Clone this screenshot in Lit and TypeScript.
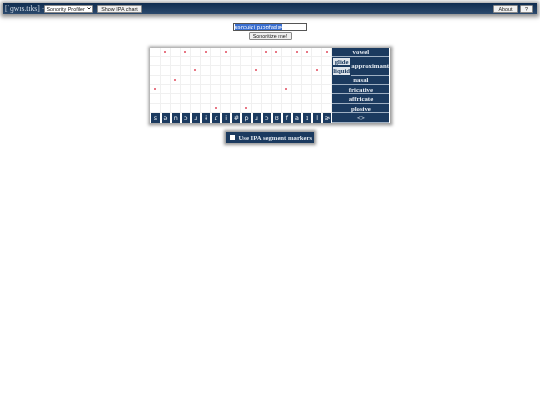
import { LitElement, html, css } from "lit";
import { customElement } from "lit/decorators.js";

const letters = ["s","ə","n","ɔ","ɹ","ɨ","ɾ","i","#","p","ɹ","ɔ","ʊ","f","a","ɪ","l","ɚ"];
// row index of the dot per column: 0 vowel, 1 glide, 2 liquid, 3 nasal, 4 fricative, 5 affricate, 6 plosive
const dots = [4,0,3,0,2,0,6,0,-1,6,2,0,0,4,0,0,2,0];

@customElement("app-root")
export class AppRoot extends LitElement {
  static styles = css`
    :host { display: block; width: 540px; height: 405px; background: #fff; overflow: hidden;
      font-family: "Liberation Sans", Arial, sans-serif; }
    .page { display: flex; flex-direction: column; align-items: center; filter: blur(0.3px); }
    .bar { box-sizing: border-box; align-self: stretch; margin: 3px 3px 0; height: 11px; display: flex; align-items: center;
      gap: 4px; padding: 0 4px 0 2px; background: linear-gradient(#0f2c4f, #2c4a6d);
      box-shadow: 0 1px 4px 2px rgba(70,70,70,.6); }
    .brand { font-family: "Liberation Serif", "DejaVu Serif", serif; font-size: 7.6px; color: #cfd8e3; white-space: nowrap; width: 35px; }
    .ctl { box-sizing: border-box; height: 8px; font-family: "Liberation Sans", sans-serif; font-size: 5.4px; line-height: 6px;
      color: #222; background: #efefef; border: 0.5px solid #888; border-radius: 1px; padding: 0; display: flex;
      align-items: center; justify-content: center; white-space: nowrap; }
    .select { width: 49px; background: #fff; justify-content: space-between; padding: 0 1px 0 1.5px; }
    .select svg { width: 4px; height: 3px; }
    .chart { width: 45px; }
    .spacer { flex: 1; }
    .about { width: 25px; margin-right: -2px; }
    .help { width: 13px; background: #f4f4f4; }
    .form { display: flex; flex-direction: column; align-items: center; gap: 1px; margin-top: 8.5px; }
    .input { box-sizing: border-box; width: 74px; height: 8px; border: 0.75px solid #555; background: #fff; display: flex;
      align-items: center; padding-left: 0.5px; font-family: "DejaVu Sans", sans-serif; font-size: 5.4px; line-height: 6px; overflow: hidden; }
    .input span { background: #3a6fd0; color: #fff; white-space: nowrap; }
    .go { width: 43px; height: 8px; }
    .chart-wrap { margin-top: 8px; display: grid; grid-template-columns: repeat(18, 10.12px) 18.5px 38.5px; grid-auto-rows: 9.4px;
      width: 239.16px; box-shadow: 0 0 3px 2.5px rgba(90,90,90,.6); background: #fff; }
    .cell { box-sizing: border-box; border-right: 0.5px solid #f0f0f0; border-bottom: 0.5px solid #f0f0f0; display: flex;
      align-items: center; justify-content: center; }
    .dot { width: 2px; height: 2px; border-radius: 50%; background: #e04a5c; }
    .seg { box-sizing: border-box; background: #1b3a5f; color: #e6ecf3; border: 0.5px solid #fff; border-width: 0 0.5px 0 0.5px;
      font-family: "DejaVu Sans", sans-serif; font-size: 6.4px; display: flex; align-items: center; justify-content: center; line-height: 1; }
    .label { box-sizing: border-box; background: #1b3a5f; color: #e3e9f0; border-bottom: 0.75px solid #9fb0c3;
      font-family: "Liberation Serif", serif; font-weight: bold; font-size: 6.8px; display: flex; align-items: center;
      justify-content: center; white-space: nowrap; }
    .full { grid-column: span 2; }
    .sub { background: #dfe5ec; color: #1b3a5f; border: 0.75px solid #1b3a5f; }
    .approx { grid-row: span 2; }
    .toggle { margin-top: 9px; box-sizing: border-box; width: 88px; height: 11px; background: #1b3a5f; display: flex; align-items: center;
      gap: 3.5px; padding-left: 4px; box-shadow: 0 0 3px 2px rgba(90,90,90,.65); color: #dfe6ee;
      font-family: "Liberation Serif", serif; font-weight: bold; font-size: 6.7px; white-space: nowrap; }
    .check { width: 5px; height: 5px; background: #fff; flex: none; }
  `;

  private grid() {
    const rows: [string, string][] = [
      ["vowel", "full"], ["glide", "sub"], ["liquid", "sub"], ["nasal", "full"],
      ["fricative", "full"], ["affricate", "full"], ["plosive", "full"],
    ];
    return rows.map(([name, kind], r) => html`
      ${letters.map((_, c) => html`<div class="cell">${dots[c] === r ? html`<div class="dot"></div>` : ""}</div>`)}
      <div class="label ${kind}">${name}</div>
      ${r === 1 ? html`<div class="label approx">approximant</div>` : ""}
    `);
  }

  render() {
    return html`<div class="page">
      <div class="bar">
        <span class="brand">[ˈɡwɪs.tɪks] ·</span>
        <div class="ctl select">Sonority Profiler
          <svg viewBox="0 0 8 6"><path d="M1 1l3 3 3-3" fill="none" stroke="#222" stroke-width="2"/></svg></div>
        <div class="ctl chart">Show IPA chart</div>
        <div class="spacer"></div>
        <div class="ctl about">About</div>
        <div class="ctl help">?</div>
      </div>
      <div class="form">
        <div class="input"><span>sənɔɹɨɾi pɹɔʊfaɪlɚ</span></div>
        <div class="ctl go">Sonoritize me!</div>
      </div>
      <div class="chart-wrap">
        ${this.grid()}
        ${letters.map((l) => html`<div class="seg">${l}</div>`)}
        <div class="label full">&lt;&gt;</div>
      </div>
      <div class="toggle"><span class="check"></span>Use IPA segment markers</div>
    </div>`;
  }
}
